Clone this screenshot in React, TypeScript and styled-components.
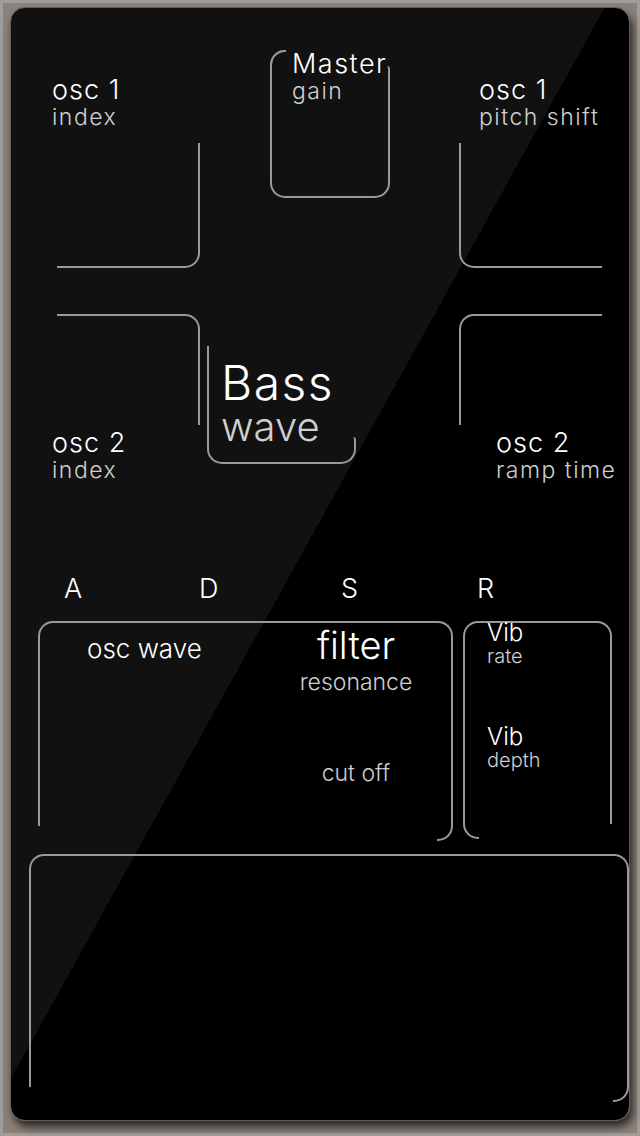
import styled, { createGlobalStyle, css } from 'styled-components';

const LINE = '#999999';
const W = 2;
const stroke = `${W}px solid ${LINE}`;

const GlobalStyle = createGlobalStyle`
  html, body {
    margin: 0;
    padding: 0;
    background: #8d8279;
  }
  body {
    font-family: Inter, "Noto Sans", "DejaVu Sans", sans-serif;
  }
`;

const Page = styled.div`
  box-sizing: border-box;
  width: 640px;
  height: 1136px;
  padding: 4px 7px;
  border: 3px solid #9d9d9d;
  background: #8d8279;
`;

const Panel = styled.div`
  box-sizing: border-box;
  display: flex;
  flex-direction: column;
  width: 620px;
  height: 1114px;
  padding-top: 42px;
  border: 1px solid #5e5e5e;
  border-radius: 15px;
  background: linear-gradient(119deg, #111111 519px, #000000 519px);
  box-shadow: 3px 6px 8px rgba(0, 0, 0, 0.7);
`;

const TopGrid = styled.div`
  display: grid;
  grid-template-columns: 147px 260px 161px;
  row-gap: 46px;
  align-items: start;
  margin-left: 41px;
`;

const Cell = styled.div<{ $y?: number }>`
  display: flex;
  flex-direction: column;
  margin-top: ${p => p.$y ?? 0}px;
`;

const Label = styled.div<{ $x?: number; $y?: number }>`
  margin-left: ${p => p.$x ?? 0}px;
  margin-top: ${p => p.$y ?? 0}px;
  white-space: nowrap;
`;

const Title = styled.div<{ $size?: number; $lh?: number; $gap?: number; $track?: number }>`
  color: #ffffff;
  font-size: ${p => p.$size ?? 27}px;
  line-height: ${p => p.$lh ?? 28}px;
  font-weight: 350;
  letter-spacing: ${p => p.$track ?? 1}px;
  margin-top: ${p => p.$gap ?? 0}px;
`;

const Sub = styled.div<{ $size?: number; $lh?: number; $gap?: number; $track?: number }>`
  color: #cfcfcf;
  font-size: ${p => p.$size ?? 23}px;
  line-height: ${p => p.$lh ?? 26}px;
  font-weight: 300;
  letter-spacing: ${p => p.$track ?? 1.5}px;
  margin-top: ${p => p.$gap ?? 0}px;
`;

type Tail = 'down-right' | 'down-left' | 'hook-right';

const Outline = styled.div<{
  $w: number;
  $h: number;
  $sides: string;
  $radius?: string;
  $x?: number;
  $y?: number;
  $tail?: Tail;
  $tailH?: number;
  $cap?: boolean;
}>`
  position: relative;
  box-sizing: border-box;
  flex: none;
  width: ${p => p.$w}px;
  height: ${p => p.$h}px;
  margin-left: ${p => p.$x ?? 0}px;
  margin-top: ${p => p.$y ?? 0}px;
  border-style: solid;
  border-color: ${LINE};
  border-width: ${p => ['t', 'r', 'b', 'l'].map(s => (p.$sides.includes(s) ? `${W}px` : '0')).join(' ')};
  border-radius: ${p => p.$radius ?? '0'};

  ${p =>
    p.$tail === 'down-right' &&
    css`
      &::after {
        content: '';
        position: absolute;
        top: 100%;
        right: -${W}px;
        box-sizing: border-box;
        width: 16px;
        height: 15px;
        border-right: ${stroke};
        border-bottom: ${stroke};
        border-bottom-right-radius: 15px;
      }
    `}

  ${p =>
    p.$tail === 'down-left' &&
    css`
      &::after {
        content: '';
        position: absolute;
        top: 100%;
        left: -${W}px;
        box-sizing: border-box;
        width: 16px;
        height: 15px;
        border-left: ${stroke};
        border-bottom: ${stroke};
        border-bottom-left-radius: 15px;
      }
    `}

  ${p =>
    p.$tail === 'hook-right' &&
    css`
      &::after {
        content: '';
        position: absolute;
        left: 100%;
        bottom: -${W}px;
        box-sizing: border-box;
        width: 15px;
        height: ${p.$tailH ?? 20}px;
        border-right: ${stroke};
        border-bottom: ${stroke};
        border-radius: 0 3px 15px 0;
      }
    `}

  ${p =>
    p.$cap &&
    css`
      &::before {
        content: '';
        position: absolute;
        top: 0;
        left: -${W}px;
        box-sizing: border-box;
        width: 16px;
        height: 16px;
        border-top: ${stroke};
        border-left: ${stroke};
        border-top-left-radius: 15px;
      }
    `}
`;

const EnvRow = styled.div`
  display: grid;
  grid-template-columns: 135px 142px 136px auto;
  margin: 92px 0 0 53px;
  color: #ffffff;
  font-size: 27px;
  line-height: 28px;
  font-weight: 300;
`;

const ControlRow = styled.div`
  display: flex;
  gap: 10px;
  margin: 18px 0 0 27px;
`;

const FilterLayout = styled.div`
  display: flex;
  height: 100%;
`;

const WaveCol = styled.div`
  flex: 1;
  padding: 12px 0 0 47px;
  white-space: nowrap;
`;

const FilterCol = styled.div`
  width: 190px;
  padding-top: 2px;
  text-align: center;
  white-space: nowrap;
`;

const VibCol = styled.div`
  padding-left: 22px;
  white-space: nowrap;
`;

export default function App() {
  return (
    <>
      <GlobalStyle />
      <Page>
        <Panel>
          <TopGrid>
            <Cell $y={26}>
              <Label>
                <Title>osc 1</Title>
                <Sub>index</Sub>
              </Label>
              <Outline $x={5} $y={13} $w={143} $h={125} $sides="rb" $radius="0 0 15px 0" />
            </Cell>

            <Cell>
              <Outline
                $x={71}
                $w={105}
                $h={148}
                $sides="lb"
                $radius="15px 0 0 15px"
                $tail="hook-right"
                $tailH={132}
                $cap
              >
                <Label $x={20}>
                  <Title $track={1.5}>Master</Title>
                  <Sub>gain</Sub>
                </Label>
              </Outline>
            </Cell>

            <Cell $y={26}>
              <Label $x={20}>
                <Title>osc 1</Title>
                <Sub>pitch shift</Sub>
              </Label>
              <Outline $y={13} $w={143} $h={125} $sides="lb" $radius="0 0 0 15px" />
            </Cell>

            <Cell>
              <Outline $x={5} $w={143} $h={111} $sides="tr" $radius="0 15px 0 0" />
              <Label $y={4}>
                <Title>osc 2</Title>
                <Sub>index</Sub>
              </Label>
            </Cell>

            <Cell $y={32}>
              <Outline
                $x={8}
                $w={134}
                $h={118}
                $sides="lb"
                $radius="0 0 0 15px"
                $tail="hook-right"
                $tailH={27}
              >
                <Label $x={12} $y={13}>
                  <Title $size={48} $lh={48} $track={1.5}>Bass</Title>
                  <Sub $size={40} $lh={40} $track={0}>wave</Sub>
                </Label>
              </Outline>
            </Cell>

            <Cell>
              <Outline $w={143} $h={111} $sides="tl" $radius="15px 0 0 0" />
              <Label $x={37} $y={4}>
                <Title>osc 2</Title>
                <Sub>ramp time</Sub>
              </Label>
            </Cell>
          </TopGrid>

          <EnvRow>
            <span>A</span>
            <span>D</span>
            <span>S</span>
            <span>R</span>
          </EnvRow>

          <ControlRow>
            <Outline $w={415} $h={205} $sides="tlr" $radius="15px 15px 0 0" $tail="down-right">
              <FilterLayout>
                <WaveCol>
                  <Title $size={26} $track={0}>osc wave</Title>
                </WaveCol>
                <FilterCol>
                  <Title $size={38} $lh={40} $track={0}>filter</Title>
                  <Sub $gap={4} $track={0}>resonance</Sub>
                  <Sub $gap={65} $track={0}>cut off</Sub>
                </FilterCol>
              </FilterLayout>
            </Outline>

            <Outline $w={149} $h={203} $sides="tlr" $radius="15px 15px 0 0" $tail="down-left">
              <VibCol>
                <Title $size={24} $lh={20} $track={0}>Vib</Title>
                <Sub $size={20} $lh={22} $gap={2} $track={0}>rate</Sub>
                <Title $size={24} $lh={20} $gap={60} $track={0}>Vib</Title>
                <Sub $size={20} $lh={22} $gap={2} $track={0}>depth</Sub>
              </VibCol>
            </Outline>
          </ControlRow>

          <Outline
            $x={18}
            $y={28}
            $w={600}
            $h={233}
            $sides="tlr"
            $radius="15px 15px 0 0"
            $tail="down-right"
          />
        </Panel>
      </Page>
    </>
  );
}
